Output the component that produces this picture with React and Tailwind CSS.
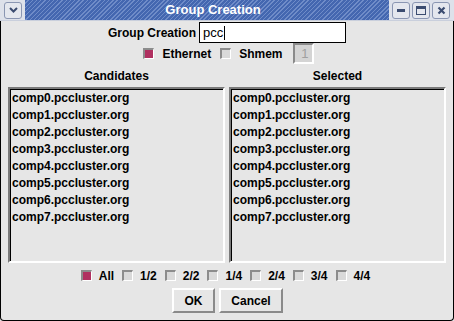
import React from 'react';

const hosts = [0, 1, 2, 3, 4, 5, 6, 7].map((n) => `comp${n}.pccluster.org`);
const fractions = ['1/2', '2/2', '1/4', '2/4', '3/4', '4/4'];

function TitleButton({ children }) {
  return (
    <div className="w-[18px] h-[17px] rounded-[3px] border border-[#8a96b2] bg-[#e4e7ee] flex items-center justify-center">
      {children}
    </div>
  );
}

function Check({ on }) {
  return (
    <div className="w-[11px] h-[11px] border-t-2 border-l-2 border-t-[#8c8c8c] border-l-[#8c8c8c] border-b border-r border-b-white border-r-white flex">
      <div className={on ? 'flex-1 bg-[#b03060]' : 'flex-1 bg-[#d9d9d9]'} />
    </div>
  );
}

function ListBox({ items }) {
  return (
    <div className="flex-1 h-[176px] border-t-2 border-l-2 border-t-[#7a7a7a] border-l-[#7a7a7a] border-b-2 border-r-2 border-b-white border-r-white">
      <div className="h-full border-t border-l border-black bg-[#e6e6e6] pl-[1px]">
        {items.map((h) => (
          <div key={h} className="h-[17px] leading-[17px]">{h}</div>
        ))}
      </div>
    </div>
  );
}

export default function App() {
  return (
    <div
      className="w-[454px] h-[321px] flex flex-col bg-[#e6e6e6] text-black text-[12px] font-bold overflow-hidden"
      style={{ fontFamily: '"Liberation Sans", Arial, sans-serif' }}
    >
      {/* title bar */}
      <div className="h-[21px] flex bg-[#dde1ea] border-b border-[#c9cfdc]">
        <div className="w-[25px] flex items-center pl-[4px]">
          <TitleButton>
            <svg width="9" height="6" viewBox="0 0 9 6">
              <path d="M1 1 L4.5 4.5 L8 1" stroke="#3b4c70" strokeWidth="2" fill="none" />
            </svg>
          </TitleButton>
        </div>
        <div className="w-[364px] flex items-center justify-center text-white text-[13px] bg-[repeating-linear-gradient(135deg,#4467b0_0px,#4467b0_2px,#6f8cc8_2px,#6f8cc8_3px)] pl-[12px]">
          Group Creation
        </div>
        <div className="flex-1 flex items-center gap-[2px] pl-[3px]">
          <TitleButton>
            <div className="w-[8px] h-[3px] bg-[#3b4c70]" />
          </TitleButton>
          <TitleButton>
            <div className="w-[10px] h-[9px] border border-t-[3px] border-[#3b4c70]" />
          </TitleButton>
          <TitleButton>
            <svg width="9" height="9" viewBox="0 0 9 9">
              <path d="M1.5 1.5 L7.5 7.5 M7.5 1.5 L1.5 7.5" stroke="#3b4c70" strokeWidth="2.2" />
            </svg>
          </TitleButton>
        </div>
      </div>

      {/* body */}
      <div className="flex-1 flex flex-col border-x border-b border-black rounded-b-[4px]">
        <div className="flex justify-center items-center h-[22px] pt-[1px]">
          <span className="mr-[3px]">Group Creation</span>
          <div className="w-[147px] h-[21px] border border-black bg-white flex items-center pl-[3px] font-normal text-[13px]">
            pcc<span className="w-px h-[14px] bg-black ml-px" />
          </div>
        </div>

        <div className="flex justify-center items-center h-[21px] pl-[3px]">
          <Check on />
          <span className="ml-[8px] mr-[9px]">Ethernet</span>
          <Check />
          <span className="ml-[8px] mr-[10px]">Shmem</span>
          <div className="w-[21px] h-[21px] border-t-2 border-l-2 border-t-[#8a8a8a] border-l-[#8a8a8a] border-b-2 border-r-2 border-b-white border-r-white bg-[#d4d4d4] text-[#a0a0a0] font-normal text-[13px] flex items-center justify-end pr-[3px]">
            1
          </div>
        </div>

        <div className="flex px-[7px] gap-[4px] mt-[2px] h-[20px] items-center">
          <div className="flex-1 text-center">Candidates</div>
          <div className="flex-1 text-center">Selected</div>
        </div>

        <div className="flex px-[7px] gap-[4px] mt-[1px]">
          <ListBox items={hosts} />
          <ListBox items={hosts} />
        </div>

        <div className="flex justify-center items-center h-[21px] mt-[2px] pr-[3px]">
          <Check on />
          <span className="ml-[7px] mr-[8px]">All</span>
          {fractions.map((f, i) => (
            <React.Fragment key={f}>
              <Check />
              <span className={i === fractions.length - 1 ? 'ml-[7px]' : 'ml-[7px] mr-[8px]'}>{f}</span>
            </React.Fragment>
          ))}
        </div>

        <div className="flex justify-center gap-[4px] mt-[2px] pl-[1px]">
          <button className="w-[43px] h-[25px] border-t-2 border-l-2 border-t-white border-l-white border-b-2 border-r-2 border-b-[#8a8a8a] border-r-[#8a8a8a] bg-[#e6e6e6] font-bold">
            OK
          </button>
          <button className="w-[64px] h-[25px] border-t-2 border-l-2 border-t-white border-l-white border-b-2 border-r-2 border-b-[#8a8a8a] border-r-[#8a8a8a] bg-[#e6e6e6] font-bold">
            Cancel
          </button>
        </div>
      </div>
    </div>
  );
}
